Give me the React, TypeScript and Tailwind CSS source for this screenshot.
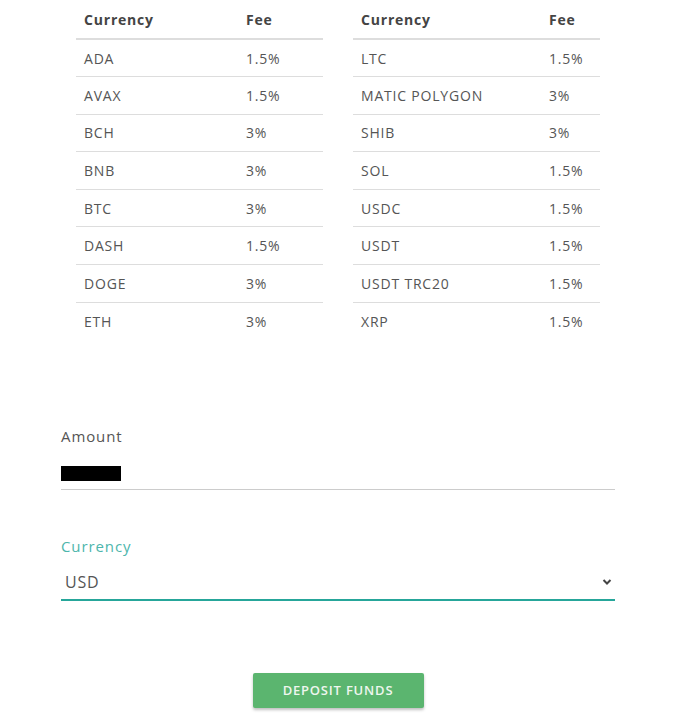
const left = [
  ['ADA', '1.5%'],
  ['AVAX', '1.5%'],
  ['BCH', '3%'],
  ['BNB', '3%'],
  ['BTC', '3%'],
  ['DASH', '1.5%'],
  ['DOGE', '3%'],
  ['ETH', '3%'],
];

const right = [
  ['LTC', '1.5%'],
  ['MATIC POLYGON', '3%'],
  ['SHIB', '3%'],
  ['SOL', '1.5%'],
  ['USDC', '1.5%'],
  ['USDT', '1.5%'],
  ['USDT TRC20', '1.5%'],
  ['XRP', '1.5%'],
];

function FeeTable({ rows, first }: { rows: string[][]; first: string }) {
  return (
    <table className="w-[247px] border-collapse text-[14px] tracking-[0.8px] text-[#555]">
      <thead>
        <tr className="h-[39px] border-b-2 border-[#ddd]">
          <th className={`${first} pl-2 text-left font-bold text-[#444]`}>Currency</th>
          <th className="pl-2 text-left font-bold text-[#444]">Fee</th>
        </tr>
      </thead>
      <tbody>
        {rows.map(([c, f], i) => (
          <tr
            key={c}
            className={`h-[37.6px] ${i < rows.length - 1 ? 'border-b border-[#ddd]' : ''}`}
          >
            <td className="pl-2">{c}</td>
            <td className="pl-2">{f}</td>
          </tr>
        ))}
      </tbody>
    </table>
  );
}

export default function App() {
  return (
    <div className="min-h-screen bg-white font-['Open_Sans',sans-serif]">
      {/* fee tables */}
      <div className="flex justify-center gap-[30px] pl-[3px]">
        <FeeTable rows={left} first="w-[162px]" />
        <FeeTable rows={right} first="w-[188px]" />
      </div>

      {/* deposit form */}
      <div className="pl-[61px] pr-[58px] mt-[86px]">
        <label className="block text-[15px] leading-5 tracking-[0.9px] text-[#555]">Amount</label>
        <div className="mt-[20px] border-b border-[#ccc] pb-[8px]">
          <div className="h-[15px] w-[60px] bg-black" />
        </div>

        <label className="mt-[46px] block text-[15px] leading-5 tracking-[0.9px] text-[#4db6ac]">Currency</label>
        <div className="mt-[15px] flex items-center justify-between border-b-2 border-[#26a69a] pb-[6px] pl-1 pr-[3px]">
          <span className="text-[16px] leading-[22px] tracking-[0.8px] text-[#555]">USD</span>
          <svg width="10" height="8" viewBox="0 0 10 8" className="text-[#444]">
            <path d="M1.5 2 L5 5.5 L8.5 2" fill="none" stroke="currentColor" strokeWidth="2" />
          </svg>
        </div>
      </div>

      <div className="mt-[72px] flex justify-center pl-[3px]">
        <button className="h-[35px] w-[171px] rounded-[2px] bg-[#5bb56f] text-[13px] font-semibold tracking-[0.8px] text-[#eef6ee] shadow-[0_2px_3px_rgba(0,0,0,0.25)]">
          DEPOSIT FUNDS
        </button>
      </div>
    </div>
  );
}
